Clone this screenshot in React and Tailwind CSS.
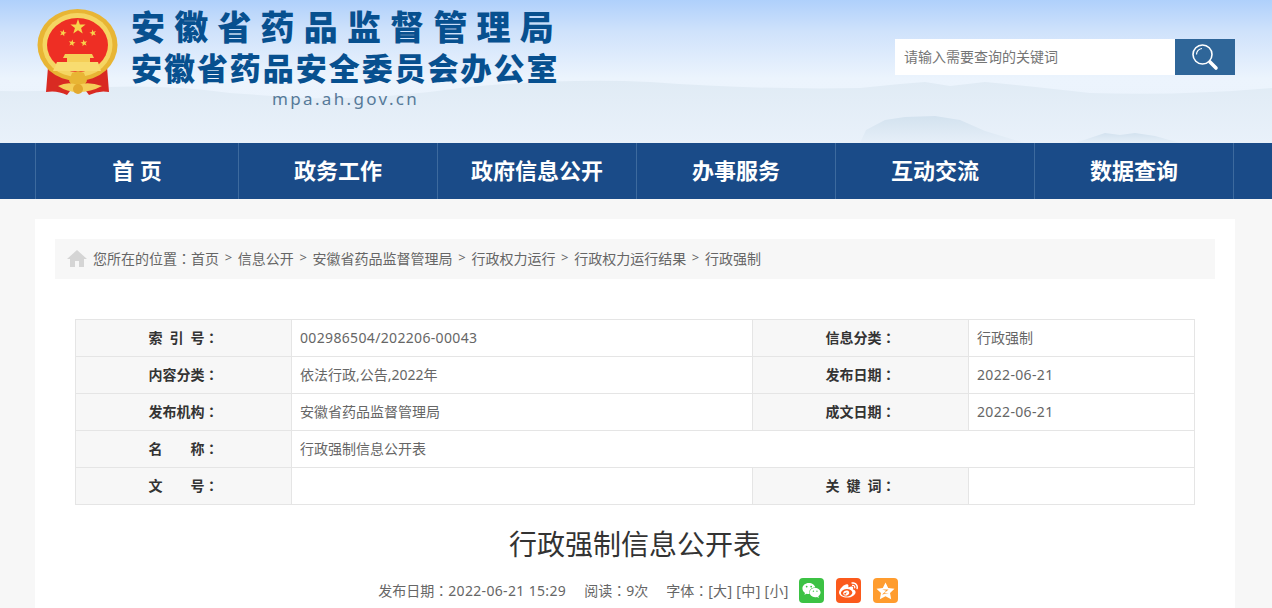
import { FaWeixin, FaWeibo } from 'react-icons/fa';

const navItems = ['首 页', '政务工作', '政府信息公开', '办事服务', '互动交流', '数据查询'];
const crumbs = ['首页', '信息公开', '安徽省药品监督管理局', '行政权力运行', '行政权力运行结果', '行政强制'];
const font = 'font-["Noto_Sans","Noto_Sans_CJK_SC",sans-serif]';

function Star({ x, y, r, rot = 0 }) {
  const pts = [];
  for (let i = 0; i < 10; i++) {
    const rad = i % 2 === 0 ? r : r * 0.4;
    const a = (-90 + rot + i * 36) * Math.PI / 180;
    pts.push(`${(x + rad * Math.cos(a)).toFixed(2)},${(y + rad * Math.sin(a)).toFixed(2)}`);
  }
  return <polygon points={pts.join(' ')} fill="#f8d44c" />;
}

function Emblem() {
  return (
    <svg width="81" height="87" viewBox="0 0 81 87" className="shrink-0">
      <path d="M11 58 L9 83 Q20 81 30 86 L36 78 L46 78 L52 86 Q62 81 72 83 L70 58 Z" fill="#d92a22" />
      <ellipse cx="40.5" cy="36" rx="40" ry="36" fill="#e8b534" />
      <ellipse cx="40.5" cy="36" rx="35" ry="32" fill="#f5d562" />
      <ellipse cx="40.5" cy="36" rx="30.5" ry="27" fill="#ee2e24" />
      <Star x={41} y={18} r={8} />
      <Star x={26} y={24} r={3.6} rot={15} />
      <Star x={56} y={24} r={3.6} rot={-15} />
      <Star x={35} y={34} r={3.6} rot={10} />
      <Star x={47} y={34} r={3.6} rot={-10} />
      <path d="M28 45 H55 L57 49 H53 V53 H30 V49 H26 Z" fill="#f5cf58" />
      <path d="M20 53 H61 L64 62 H16 Z" fill="#f8dc70" />
      <path d="M32 72 L35 64 L41 62 L47 64 L50 72 L46 78 H36 Z" fill="#e8b534" />
      <path d="M21 77 Q31 72 41 76 Q51 72 65 77 Q54 83 41 83 Q30 83 21 77 Z" fill="#f5cf58" />
      <circle cx="41" cy="80" r="5" fill="#e3a92e" />
    </svg>
  );
}

function HeaderBg() {
  return (
    <svg className="absolute inset-0 w-full h-full" viewBox="0 0 1272 143" preserveAspectRatio="none">
      <defs>
        <linearGradient id="sky" x1="0" y1="0" x2="0" y2="1">
          <stop offset="0" stopColor="#afd0fb" />
          <stop offset="0.22" stopColor="#cfe2fb" />
          <stop offset="0.55" stopColor="#ecf4fd" />
          <stop offset="1" stopColor="#eaf2fb" />
        </linearGradient>
        <linearGradient id="far" x1="0" y1="0" x2="0" y2="1">
          <stop offset="0" stopColor="#e0ebf5" />
          <stop offset="1" stopColor="#e9f1fa" />
        </linearGradient>
        <linearGradient id="near" x1="0" y1="0" x2="0" y2="1">
          <stop offset="0" stopColor="#d3e2ef" />
          <stop offset="1" stopColor="#e6eff8" />
        </linearGradient>
      </defs>
      <rect width="1272" height="143" fill="url(#sky)" />
      <path d="M0 91 Q50 92 110 87 Q170 85 230 93 L300 98 Q380 100 460 88 Q560 78 650 82 Q760 90 860 88 L900 84 L925 82 L950 86 L985 82 Q1030 86 1090 93 Q1180 96 1272 88 V143 H0 Z" fill="url(#far)" />
      <path d="M860 143 L866 130 L885 120 L905 117 L935 116 L960 120 L985 131 L1025 143 Z" fill="url(#near)" />
      <path d="M1075 143 L1090 138 L1105 133 L1120 135 L1135 133 L1155 136 L1180 143 Z" fill="url(#near)" />
    </svg>
  );
}

function SearchGlyph() {
  return (
    <svg width="28" height="28" viewBox="0 0 28 28" fill="none" stroke="#fff">
      <circle cx="11.5" cy="11.5" r="9.5" strokeWidth="1.6" />
      <path d="M5.5 11.5 A6 6 0 0 1 11 5.5" strokeWidth="1.2" />
      <path d="M19 19 L25 25" strokeWidth="3.6" strokeLinecap="round" />
    </svg>
  );
}

function HomeGlyph() {
  return (
    <svg width="20" height="17" viewBox="0 0 20 17" fill="#d5d5d5">
      <path d="M10 0 L20 9 H17 V17 H12 V11 H8 V17 H3 V9 H0 Z" />
    </svg>
  );
}

function QzoneGlyph() {
  return (
    <svg width="19" height="18" viewBox="0 0 19 18">
      <path d="M9.5 0.5 L12.2 6 L18.5 6.8 L14 11 L15.2 17.3 L9.5 14.3 L3.8 17.3 L5 11 L0.5 6.8 L6.8 6 Z" fill="#fff" />
      <path d="M6.2 7.6 H12.6 L8.2 11.2 H12.9 L6 12.6 L10.2 8.8 Z" fill="#ff9c2e" />
    </svg>
  );
}

// the full-width colon sits centred in the cell in the original, the TC face draws it that way
function Colon() {
  return <span className='font-["Noto_Sans_CJK_TC",sans-serif]'>：</span>;
}

function Num({ children }) {
  return <span className="tracking-[0.34px]">{children}</span>;
}

function Label({ children }) {
  return (
    <td className="w-[216px] h-[37px] border border-[#e5e5e5] bg-[#f7f7f7] text-center font-bold text-[#333] p-0 [word-spacing:3.4px]">
      <span className="relative top-[-1px]">{children}<Colon /></span>
    </td>
  );
}

function Value({ children, ...rest }) {
  return (
    <td {...rest} className="h-[37px] border border-[#e5e5e5] px-[8px] text-[#666]">
      <span className="relative top-[-1px]">{children}</span>
    </td>
  );
}

export default function App() {
  return (
    <div className={`h-[608px] overflow-hidden bg-[#f7f7f7] text-[14px] ${font}`}>
      <header className="relative h-[143px]">
        <HeaderBg />
        <div className="relative flex ml-[37px] w-[1198px] pt-[9px]">
          <Emblem />
          <div className="ml-[13px] mt-[-2px] flex flex-col items-start">
            <div className="text-[34px] leading-[40px] font-black text-[#07508f] tracking-[9.2px] whitespace-nowrap">安徽省药品监督管理局</div>
            <div className="mt-[3px] text-[31px] leading-[36px] font-black text-[#07508f] tracking-[1.95px] whitespace-nowrap">安徽省药品安全委员会办公室</div>
            <div className="mt-[3px] ml-[141px] text-[17px] leading-[20px] tracking-[2.35px] text-[#567a99]">mpa.ah.gov.cn</div>
          </div>
          <div className="ml-auto mt-[30px] flex h-[36px] w-[340px]">
            <div className="flex-1 bg-white pl-[9px] leading-[36px] text-[#757575]">请输入需要查询的关键词</div>
            <div className="w-[60px] bg-[#2f6699] flex items-center justify-center">
              <SearchGlyph />
            </div>
          </div>
        </div>
      </header>

      <nav className="h-[56px] bg-[#1a4b88]">
        <ul className="flex ml-[35px] w-[1199px] h-full border-l border-[#3d6a9e]">
          {navItems.map((item, i) => (
            <li
              key={item}
              className={`${i === 0 ? 'w-[203px]' : 'w-[199px]'} border-r border-[#3d6a9e] flex items-center justify-center pb-[2px] text-white text-[22px] font-bold`}
            >
              {item}
            </li>
          ))}
        </ul>
      </nav>

      <main className="ml-[35px] mt-[20px] w-[1200px] bg-white px-[20px] pt-[20px] h-[400px]">
        <div className="h-[40px] bg-[#f7f7f7] flex items-center pl-[12px] pb-[2px] text-[#666]">
          <HomeGlyph />
          <span className="ml-[6px]">您所在的位置<Colon /></span>
          {crumbs.map((c, i) => (
            <span key={c} className="flex items-center">
              {i > 0 && <span className="w-[18.8px] text-center text-[13px]">&gt;</span>}
              {c}
            </span>
          ))}
        </div>

        <table className="mt-[40px] ml-[20px] w-[1119px] table-fixed border-collapse">
          <colgroup>
            <col className="w-[216px]" />
            <col className="w-[461px]" />
            <col className="w-[216px]" />
            <col className="w-[226px]" />
          </colgroup>
          <tbody>
            <tr>
              <Label>索 引 号</Label>
              <Value><Num>002986504/202206-00043</Num></Value>
              <Label>信息分类</Label>
              <Value>行政强制</Value>
            </tr>
            <tr>
              <Label>内容分类</Label>
              <Value>依法行政,公告,2022年</Value>
              <Label>发布日期</Label>
              <Value><Num>2022-06-21</Num></Value>
            </tr>
            <tr>
              <Label>发布机构</Label>
              <Value>安徽省药品监督管理局</Value>
              <Label>成文日期</Label>
              <Value><Num>2022-06-21</Num></Value>
            </tr>
            <tr>
              <Label>名　　称</Label>
              <Value colSpan={3}>行政强制信息公开表</Value>
            </tr>
            <tr>
              <Label>文　　号</Label>
              <Value></Value>
              <Label>关 键 词</Label>
              <Value></Value>
            </tr>
          </tbody>
        </table>

        <h1 className="mt-[19px] text-center text-[28px] leading-[40px] text-[#333]">行政强制信息公开表</h1>

        <div className="mt-[14px] flex items-center justify-center pl-[6px] text-[#666]">
          <span>发布日期<Colon /><Num>2022-06-21 15:29</Num></span>
          <span className="ml-[18px]">阅读<Colon />9次</span>
          <span className="ml-[18px]">字体<Colon /><Num>[大] [中] [小]</Num></span>
          <div className="ml-[10px] flex gap-[12px]">
            <span className="w-[25px] h-[25px] rounded-[4px] bg-[#3cc244] flex items-center justify-center text-white">
              <FaWeixin size={19} />
            </span>
            <span className="w-[25px] h-[25px] rounded-[4px] bg-[#fb5a1c] flex items-center justify-center text-white">
              <FaWeibo size={19} />
            </span>
            <span className="w-[25px] h-[25px] rounded-[4px] bg-[#ff9c2e] flex items-center justify-center">
              <QzoneGlyph />
            </span>
          </div>
        </div>
      </main>
    </div>
  );
}
